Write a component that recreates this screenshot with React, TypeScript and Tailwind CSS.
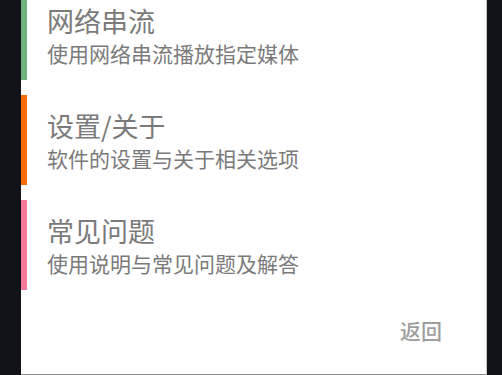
import React from "react";

const items = [
  { title: "网络串流", sub: "使用网络串流播放指定媒体", bar: "bg-[#6fb37f]" },
  { title: "设置/关于", sub: "软件的设置与关于相关选项", bar: "bg-[#ff6d00]" },
  { title: "常见问题", sub: "使用说明与常见问题及解答", bar: "bg-[#f77a9d]" },
];

export default function App() {
  return (
    <div
      className="w-[502px] h-[375px] bg-[#111318] overflow-hidden flex"
      style={{ fontFamily: '"Noto Sans CJK SC", "Noto Sans", sans-serif' }}
    >
      <div className="ml-[21px] w-[466px] h-[375px] bg-white border-r border-b border-r-[#c8c8c8] border-b-[#8a8a8a] flex flex-col overflow-hidden">
        <div className="-mt-[10px] flex flex-col gap-[15px]">
          {items.map((it) => (
            <div key={it.title} className="h-[90px] flex">
              <div className={`w-[6px] h-full ${it.bar}`} />
              <div className="pl-[20px] pt-[17px] flex flex-col text-[#7a7a7a]">
                <div className="text-[27px] leading-none">{it.title}</div>
                <div className="mt-[9px] text-[21px] leading-none">{it.sub}</div>
              </div>
            </div>
          ))}
        </div>
        <div className="flex justify-end pr-[44px] mt-[30px]">
          <span className="text-[21px] leading-none font-medium text-[#9e9e9e]">返回</span>
        </div>
      </div>
    </div>
  );
}
